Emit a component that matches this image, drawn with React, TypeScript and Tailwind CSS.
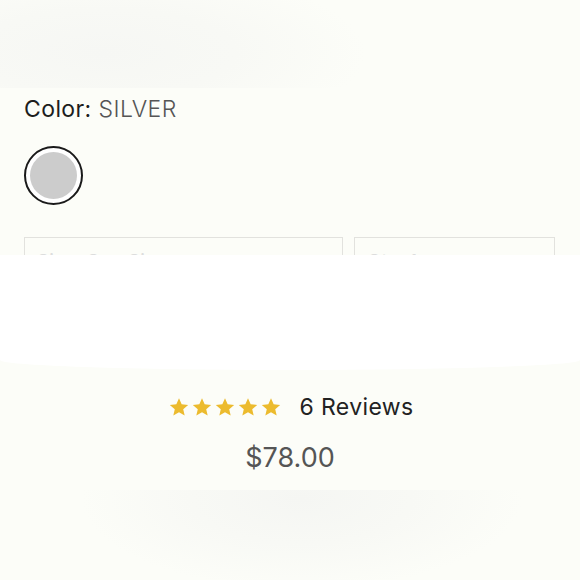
import * as React from 'react';

const Star: React.FC = () => (
    <svg viewBox="0 0 24 24" className="w-[22px] h-[22px]" fill="#ecbb2e">
        <path d="M12 2.5l2.9 6.6 7.1.6-5.4 4.7 1.6 7-6.2-3.7-6.2 3.7 1.6-7L2 9.7l7.1-.6z" />
    </svg>
);

const App: React.FC = () => {
    return (
        <div className="w-[580px] h-[580px] overflow-hidden bg-[#fcfdf8] text-[#222] flex flex-col" style={{ fontFamily: 'Inter, Lato, sans-serif' }}>
            <div className="h-[88px] shrink-0 bg-[radial-gradient(ellipse_45%_100%_at_18%_60%,#f6f7f4_0%,#f8f9f5_50%,#fcfdf8_100%)]" />

            <div className="px-6 pt-[6px] text-[23px] leading-[30px] tracking-[0.4px]">
                <span className="font-normal text-[#1d1d1d]">Color:</span>{' '}
                <span className="font-light text-[#555]">SILVER</span>
            </div>

            <div className="px-6 pt-[22px]">
                <div className="w-[59px] h-[59px] rounded-full border-2 border-[#1a1a1a] bg-white p-[4px]">
                    <div className="w-full h-full rounded-full bg-[#cccccc]" />
                </div>
            </div>

            <div className="relative mt-[32px] h-[133px]">
                <div className="flex gap-[11px] px-6">
                    <div className="w-[319px] h-[50px] border border-[#e2e2de] flex items-center px-3 text-[19px] text-[#ddd]">Size: One Size</div>
                    <div className="w-[201px] h-[50px] border border-[#e2e2de] flex items-center justify-between px-3 text-[19px] text-[#ddd]">
                        <span>Qty: 1</span>
                        <span className="text-[16px]">⌄</span>
                    </div>
                </div>
                <div className="px-[26px] pt-[28px] text-[19px] text-[#eee]">This item is available to ship on May 26, 2024</div>
                <div className="absolute left-0 right-0 top-[18px] h-[115px] bg-white rounded-b-[50%_10px]" />
            </div>

            <div className="flex items-center justify-center gap-[17px] mt-[22px] pl-[2px]">
                <div className="flex gap-[1px]">
                    <Star />
                    <Star />
                    <Star />
                    <Star />
                    <Star />
                </div>
                <span className="text-[23px] leading-[30px] text-[#222] tracking-[0.4px]">6 Reviews</span>
            </div>

            <div className="text-center text-[27px] leading-[34px] text-[#555] mt-[19px]">$78.00</div>

            <div className="flex-1 mt-[15px] bg-[radial-gradient(ellipse_38%_100%_at_52%_10%,#f5f6f3_0%,#f8f9f5_50%,#fcfdf8_100%)]" />
        </div>
    );
};

export default App;
